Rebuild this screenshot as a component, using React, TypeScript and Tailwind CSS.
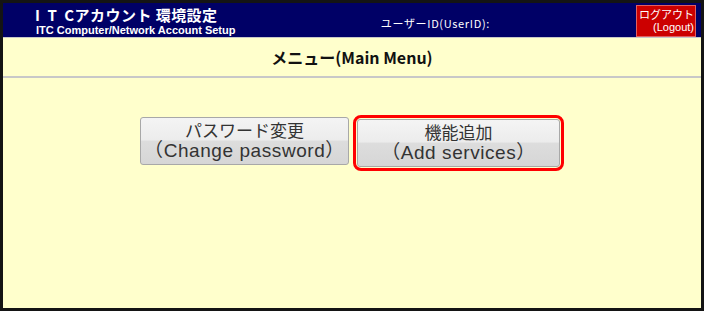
import React from 'react';

const jp = { fontFamily: '"Liberation Sans", "Noto Sans CJK JP", sans-serif' };
const gothic = { fontFamily: '"Noto Sans CJK JP", sans-serif' };

function MenuButton({ ja, en, className }: { ja: string; en: string; className?: string }) {
    return (
        <button
            className={
                'flex flex-col items-center justify-center rounded-[3px] border border-[#a8a8a8] bg-[linear-gradient(#f4f4f4_0%,#ececec_48%,#dddddd_50%,#d6d6d6_100%)] text-[#333] ' +
                (className || '')
            }
            style={jp}
        >
            <span className="text-[17px] leading-[20px]" style={gothic}>
                {ja}
            </span>
            <span className="text-[19px] leading-[22px] tracking-[0.03em]">{en}</span>
        </button>
    );
}

export default function App() {
    return (
        <div className="w-[704px] h-[311px] border-[3px] border-[#141414] bg-[#ffffcc] flex flex-col" style={jp}>
            <div className="h-[35px] bg-[#000066] border-b border-[#c8c8c8] flex items-stretch justify-between">
                <div className="pl-[32px] pt-[3px] text-white">
                    <div className="text-[15px] font-bold leading-[18px] tracking-[0.03em]" style={gothic}>
                        <span className="tracking-[0.5em]">IT</span>Cアカウント 環境設定
                    </div>
                    <div className="text-[11px] font-bold leading-[12px] pl-px">ITC Computer/Network Account Setup</div>
                </div>
                <div className="flex items-start">
                    <div className="text-white text-[11px] tracking-[0.06em] pt-[12px] mr-[146px]" style={gothic}>
                        ユーザーID(UserID):
                    </div>
                    <div className="mt-[2px] mr-[5px] w-[60px] h-[32px] bg-[#cc0000] border border-[#e06060] text-white text-[11px] leading-[13px] text-right pr-[1px] pt-[2px]">
                        <div style={gothic}>ログアウト</div>
                        <div>(Logout)</div>
                    </div>
                </div>
            </div>
            <div className="h-[40px] border-b-2 border-[#c8c8c8] flex items-center justify-center">
                <span className="text-[16px] font-bold text-[#111]" style={gothic}>
                    メニュー(Main Menu)
                </span>
            </div>
            <div className="flex justify-center items-start pt-[37px] gap-[4px]">
                <MenuButton ja="パスワード変更" en="（Change password）" className="w-[209px] h-[48px] mt-[2px]" />
                <div className="rounded-[8px] border-[3px] border-[#ff0000] p-px">
                    <MenuButton ja="機能追加" en="（Add services）" className="w-[203px] h-[48px]" />
                </div>
            </div>
        </div>
    );
}
